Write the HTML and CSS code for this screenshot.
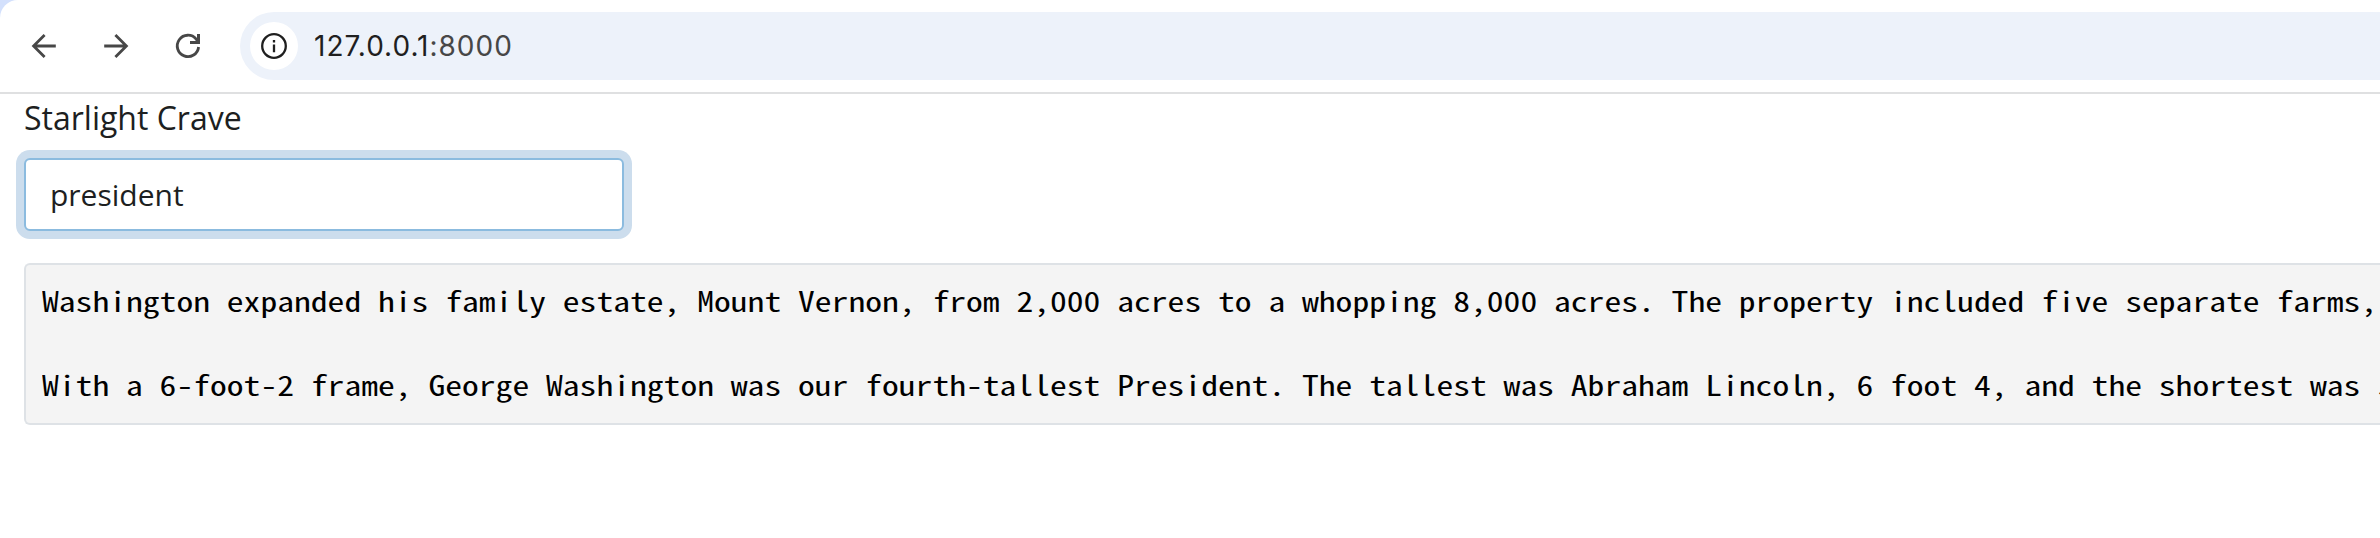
FILE: index.html
```html
<!DOCTYPE html>
<html lang="en">
<head>
<meta charset="utf-8">
<title>Starlight Crave</title>
<link rel="stylesheet" href="styles.css">
</head>
<body>
<div class="backdrop">
  <header class="toolbar">
    <nav class="nav">
      <svg class="icon" viewBox="0 0 24 24"><path d="M23.8 12H2M12.6 1 1.6 12 12.6 23"/></svg>
      <svg class="icon" viewBox="0 0 24 24"><path d="M.2 12H22M11.4 1 22.4 12 11.4 23"/></svg>
      <svg class="icon" viewBox="0 0 24 24"><path d="M22.6 13A10.7 10.7 0 1 1 20.2 5.1L22 8"/><path class="tip" d="M22.5 0V8.6H14"/></svg>
    </nav>
    <div class="address">
      <span class="site-info">
        <svg class="info" viewBox="0 0 26 26"><circle cx="13" cy="13" r="11.8"/><path d="M13 11.6V19.3M13 7V9.5"/></svg>
      </span>
      <span class="url">127.0.0.1<span class="port">:8000</span></span>
    </div>
  </header>
</div>
<main class="page">
  <label class="label" for="query">Starlight Crave</label>
  <input class="query" id="query" type="text" value="president">
  <div class="results"><pre class="passages">Washington expanded his family estate, Mount Vernon, from 2,000 acres to a whopping 8,000 acres. The property included five separate farms,

With a 6-foot-2 frame, George Washington was our fourth-tallest President. The tallest was Abraham Lincoln, 6 foot 4, and the shortest was J</pre></div>
</main>
</body>
</html>
```
FILE: styles.css
```css
* { box-sizing: border-box; }
body {
  margin: 0;
  background: #fff;
  color: #1d1f21;
  font-family: "Open Sans", sans-serif;
  overflow: hidden;
}
.backdrop { background: #d3e0fc; }
.toolbar {
  display: flex;
  align-items: center;
  gap: 40px;
  height: 94px;
  padding: 12px 0 12px 32px;
  border-bottom: 2px solid #dfe0e1;
  border-top-left-radius: 18px;
  background: #fff;
}
.nav { display: flex; gap: 48px; }
.icon {
  width: 24px;
  height: 24px;
  fill: none;
  stroke: #474747;
  stroke-width: 2.8;
  overflow: visible;
}
.tip { stroke-width: 3; }
.address {
  flex: 1;
  display: flex;
  align-items: center;
  gap: 16px;
  height: 68px;
  padding-left: 10px;
  border-radius: 34px 0 0 34px;
  background: #edf2fa;
}
.site-info {
  display: grid;
  place-items: center;
  width: 48px;
  height: 48px;
  border-radius: 50%;
  background: #fff;
}
.info {
  width: 26px;
  height: 26px;
  fill: none;
  stroke: #1f1f1f;
  stroke-width: 2.3;
}
.url {
  font: 28px/40px Inter, sans-serif;
  letter-spacing: 1px;
  color: #1f1f1f;
}
.port { color: #474747; }
.page { padding: 1px 0 0 24px; }
.label {
  display: block;
  font-size: 32px;
  line-height: 46px;
  margin-bottom: 17px;
}
.query {
  display: block;
  width: 600px;
  height: 73px;
  padding: 0 24px 1px;
  border: 2px solid #8bbbdf;
  border-radius: 6px;
  outline: none;
  box-shadow: 0 0 0 8px #ccdded;
  color: #1d1f21;
  font: 30px/45px "Open Sans", sans-serif;
}
.results {
  height: 162px;
  margin-top: 32px;
  padding: 14px 16px 16px;
  border: 2px solid #dee2e6;
  border-right: 0;
  border-radius: 6px 0 0 6px;
  background: #f4f4f4;
}
/* The face is condensed, so it is widened to a 0.6em advance. */
.passages {
  margin: 0;
  color: #000;
  font: 28px/42px "Noto Sans Mono CJK SC", "Liberation Mono", monospace;
  transform: scaleX(1.2);
  transform-origin: left top;
}
```
